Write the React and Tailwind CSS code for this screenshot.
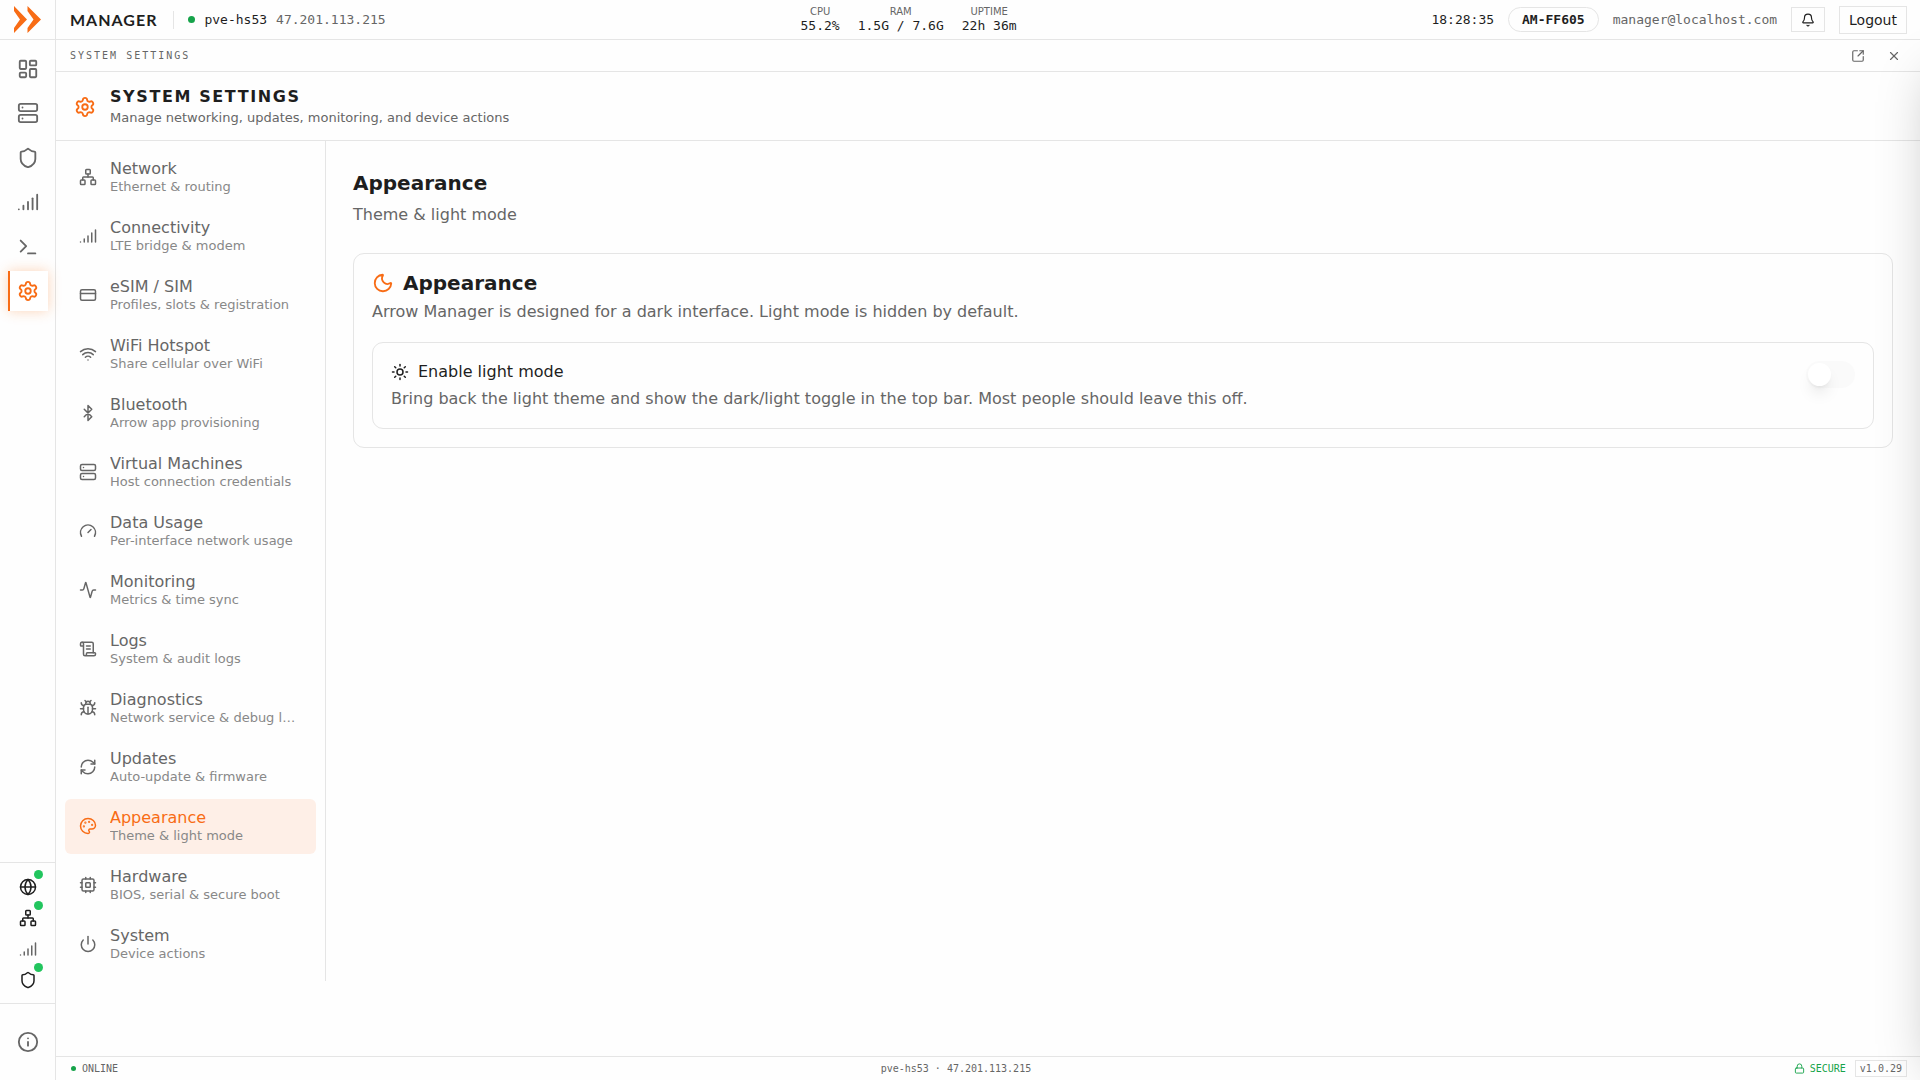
import { useState } from 'react'
import {
  Activity, Bell, Bluetooth, Bug, CreditCard, Gauge, Globe, Info, LayoutDashboard,
  Lock, Moon, Network, Palette, Power, RefreshCw, ScrollText, Server, Settings,
  Shield, Signal, SquareArrowOutUpRight, Sun, Terminal, Wifi, X,
} from 'lucide-react'

const navItems = [
  { id: 'dashboard', label: 'Dashboard', icon: LayoutDashboard },
  { id: 'machines', label: 'Virtual Machines', icon: Server },
  { id: 'security', label: 'Security', icon: Shield },
  { id: 'signal', label: 'Cellular', icon: Signal },
  { id: 'terminal', label: 'Terminal', icon: Terminal },
  { id: 'settings', label: 'System Settings', icon: Settings },
]

const statusItems = [
  { label: 'Internet', icon: Globe, up: true },
  { label: 'Ethernet', icon: Network, up: true },
  { label: 'Cellular', icon: Signal, up: false },
  { label: 'VPN', icon: Shield, up: true },
]

const sections = [
  { title: 'Network', desc: 'Ethernet & routing', icon: Network },
  { title: 'Connectivity', desc: 'LTE bridge & modem', icon: Signal },
  { title: 'eSIM / SIM', desc: 'Profiles, slots & registration', icon: CreditCard },
  { title: 'WiFi Hotspot', desc: 'Share cellular over WiFi', icon: Wifi },
  { title: 'Bluetooth', desc: 'Arrow app provisioning', icon: Bluetooth },
  { title: 'Virtual Machines', desc: 'Host connection credentials', icon: Server },
  { title: 'Data Usage', desc: 'Per-interface network usage', icon: Gauge },
  { title: 'Monitoring', desc: 'Metrics & time sync', icon: Activity },
  { title: 'Logs', desc: 'System & audit logs', icon: ScrollText },
  { title: 'Diagnostics', desc: 'Network service & debug logs', icon: Bug },
  { title: 'Updates', desc: 'Auto-update & firmware', icon: RefreshCw },
  { title: 'Appearance', desc: 'Theme & light mode', icon: Palette },
  { title: 'Hardware', desc: 'BIOS, serial & secure boot', icon: Chip },
  { title: 'System', desc: 'Device actions', icon: Power },
]

const stats = [
  { label: 'CPU', value: '55.2%' },
  { label: 'RAM', value: '1.5G / 7.6G' },
  { label: 'UPTIME', value: '22h 36m' },
]

function Logo() {
  return (
    <svg viewBox="0 0 27 27" className="size-[27px] fill-[#f86c15]">
      <path d="M0 0 L13 13.5 L0 27 V22 L6 13.5 L0 5 Z" />
      <path d="M13.5 0 L27 13.5 L13.5 27 V22 L19.5 13.5 L13.5 5 Z" />
    </svg>
  )
}

// two pins per side, lighter than lucide's Cpu
function Chip({ size, className }) {
  return (
    <svg
      width={size}
      height={size}
      viewBox="0 0 24 24"
      fill="none"
      stroke="currentColor"
      strokeWidth="2"
      strokeLinecap="round"
      strokeLinejoin="round"
      className={className}
    >
      <rect x="4" y="4" width="16" height="16" rx="2" />
      <rect x="9" y="9" width="6" height="6" rx="1" />
      <path d="M15 2v2M15 20v2M2 15h2M2 9h2M20 15h2M20 9h2M9 2v2M9 20v2" />
    </svg>
  )
}

function Sidebar() {
  return (
    <aside className="flex w-14 shrink-0 flex-col border-r border-[#e5e5e5]">
      <a href="#" aria-label="Home" className="flex h-10 shrink-0 items-center justify-center border-b border-[#e5e5e5]">
        <Logo />
      </a>
      <nav className="flex h-[280px] flex-col items-center justify-between py-[9px]">
        {navItems.map(({ id, label, icon: Icon }) => (
          <button
            key={id}
            aria-label={label}
            className={
              id === 'settings'
                ? 'flex size-10 items-center justify-center border-l-2 border-[#f86c15] bg-white pr-0.5 text-[#f86c15] shadow-[0_0_12px_rgba(249,115,22,0.3)]'
                : 'flex size-10 items-center justify-center text-[#666666]'
            }
          >
            <Icon size={22} />
          </button>
        ))}
      </nav>
      <ul className="mt-auto flex flex-col items-center gap-1 border-t border-[#e5e5e5] py-2.5">
        {statusItems.map(({ label, icon: Icon, up }) => (
          <li
            key={label}
            title={label}
            className={`relative flex size-[27px] items-center justify-center ${up ? 'text-[#1e1e1e]' : 'text-[#666666]'}`}
          >
            <Icon size={18} />
            {up && <span className="absolute -top-[3px] -right-0.5 size-[9px] rounded-full bg-[#22c55e]" />}
          </li>
        ))}
      </ul>
      <div className="flex h-[77px] items-center justify-center border-t border-[#e5e5e5]">
        <button aria-label="About" className="text-[#666666]">
          <Info size={22} />
        </button>
      </div>
    </aside>
  )
}

function TopBar() {
  return (
    <header className="flex h-10 shrink-0 items-center justify-between border-b border-[#e5e5e5] pr-[13px] pl-[14px] font-['DejaVu_Sans_Mono',monospace] text-[13px]">
      <div className="flex items-center">
        <span className="font-[Lato,sans-serif] text-base font-bold tracking-[1px]">MANAGER</span>
        <span className="ml-4 h-[18px] w-px bg-[#e5e5e5]" />
        <span className="ml-[14px] size-[7px] rounded-full bg-[#16a34a]" />
        <span className="ml-[9px]">pve-hs53</span>
        <span className="ml-[9px] text-[#666666]">47.201.113.215</span>
      </div>
      <dl className="flex gap-[18px]">
        {stats.map((s) => (
          <div key={s.label} className="flex flex-col items-center">
            <dt className="font-['DejaVu_Sans',sans-serif] text-[10px] leading-3 text-[#666666]">{s.label}</dt>
            <dd className="leading-4">{s.value}</dd>
          </div>
        ))}
      </dl>
      <div className="flex items-center gap-[14px]">
        <time>18:28:35</time>
        <span className="rounded-full border border-[#e5e5e5] px-[13px] leading-[23px] font-bold">AM-FF605</span>
        <span className="text-[#666666]">manager@localhost.com</span>
        <button aria-label="Notifications" className="flex h-[25px] w-[34px] items-center justify-center border border-[#e5e5e5]">
          <Bell size={14} />
        </button>
        <button className="h-7 border border-[#e5e5e5] px-[9px] font-['DejaVu_Sans',sans-serif] text-sm leading-none">
          Logout
        </button>
      </div>
    </header>
  )
}

function SectionList({ active, onSelect }) {
  return (
    <nav className="flex w-[270px] shrink-0 flex-col gap-1 self-start border-r border-[#e5e5e5] p-[9px]">
      {sections.map(({ title, desc, icon: Icon }) => (
        <button
          key={title}
          onClick={() => onSelect(title)}
          className={`flex items-center gap-[13px] rounded-md px-[14px] pt-[9px] pb-[10px] text-left ${
            title === active ? 'bg-[#feefe7] text-[#f86c15]' : 'text-[#666666]'
          }`}
        >
          <Icon size={18} className="shrink-0" />
          <span className="min-w-0 flex-1">
            <span className="block truncate text-base leading-5">{title}</span>
            <span className="block truncate text-[13px] leading-4 text-[#888888]">{desc}</span>
          </span>
        </button>
      ))}
    </nav>
  )
}

function Appearance() {
  const [lightMode, setLightMode] = useState(false)

  return (
    <main className="min-w-0 flex-1 p-[27px]">
      <h2 className="text-xl leading-[30px] font-bold">Appearance</h2>
      <p className="mt-[5px] text-base leading-6 text-[#666666]">Theme &amp; light mode</p>
      <section className="mt-[26px] rounded-[11px] border border-[#e5e5e5] p-[18px]">
        <h3 className="flex items-center gap-[9px] text-xl leading-[22px] font-bold">
          <Moon size={22} className="text-[#f86c15]" />
          Appearance
        </h3>
        <p className="mt-[6px] text-base leading-6 text-[#666666]">
          Arrow Manager is designed for a dark interface. Light mode is hidden by default.
        </p>
        <div className="mt-[18px] flex items-start justify-between gap-4 rounded-[11px] border border-[#e5e5e5] p-[18px]">
          <div>
            <label htmlFor="light-mode" className="flex items-center gap-[9px] text-base leading-[22px]">
              <Sun size={18} />
              Enable light mode
            </label>
            <p className="mt-1 text-base leading-[23px] text-[#666666]">
              Bring back the light theme and show the dark/light toggle in the top bar. Most people should leave this off.
            </p>
          </div>
          <input
            id="light-mode"
            type="checkbox"
            role="switch"
            checked={lightMode}
            onChange={(e) => setLightMode(e.target.checked)}
            className="h-[27px] w-[49px] shrink-0 cursor-pointer appearance-none rounded-full bg-[#fafafa] p-0.5 before:block before:size-[23px] before:rounded-full before:bg-white before:shadow-lg checked:bg-[#f86c15] checked:before:ml-[22px]"
          />
        </div>
      </section>
    </main>
  )
}

export default function App() {
  const [active, setActive] = useState('Appearance')

  return (
    <div className="flex h-screen overflow-hidden bg-[#fefefe] font-['DejaVu_Sans',sans-serif] text-[#1e1e1e]">
      <Sidebar />
      <div className="flex min-w-0 flex-1 flex-col">
        <TopBar />
        <div className="relative flex min-h-0 flex-1 flex-col">
          <div className="flex h-8 shrink-0 items-center justify-between border-b border-[#e5e5e5] pr-[19px] pl-[14px] text-[#666666]">
            <span className="font-['DejaVu_Sans_Mono',monospace] text-[10px] tracking-[2px]">SYSTEM SETTINGS</span>
            <div className="flex items-center gap-[22px]">
              <button aria-label="Open in new window">
                <SquareArrowOutUpRight size={14} />
              </button>
              <button aria-label="Close">
                <X size={14} />
              </button>
            </div>
          </div>
          <div className="flex shrink-0 items-center gap-[14px] border-b border-[#e5e5e5] px-[18px] pt-[14px] pb-3">
            <Settings size={22} className="text-[#f86c15]" />
            <div>
              <h1 className="text-base leading-[22px] font-bold tracking-widest">SYSTEM SETTINGS</h1>
              <p className="text-[13px] leading-5 text-[#666666]">Manage networking, updates, monitoring, and device actions</p>
            </div>
          </div>
          <div className="flex min-h-0 flex-1">
            <SectionList active={active} onSelect={setActive} />
            <Appearance />
          </div>
          {/* closed drawer parked past the right edge, only its shadow shows */}
          <div className="pointer-events-none absolute inset-y-0 left-full w-96 bg-white shadow-2xl" />
        </div>
        <footer className="flex h-6 shrink-0 items-center justify-between border-t border-[#e5e5e5] pr-[13px] pl-[15px] font-['DejaVu_Sans_Mono',monospace] text-[10px] text-[#666666]">
          <span className="flex items-center gap-1.5">
            <span className="size-[5px] rounded-full bg-[#16a34a]" />
            ONLINE
          </span>
          <span>pve-hs53 · 47.201.113.215</span>
          <span className="flex items-center gap-[9px]">
            <span className="flex items-center gap-[5px] text-[#16a34a]">
              <Lock size={11} />
              SECURE
            </span>
            <span className="border border-[#e5e5e5] px-1 leading-[15px]">v1.0.29</span>
          </span>
        </footer>
      </div>
    </div>
  )
}
